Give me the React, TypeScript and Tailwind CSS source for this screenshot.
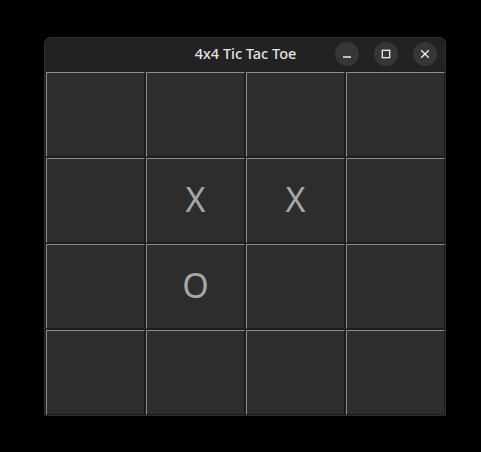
import * as React from "react";

const board: string[] = [
  "", "", "", "",
  "", "X", "X", "",
  "", "O", "", "",
  "", "", "", "",
];

function TitleButton({ children }: { children: React.ReactNode }) {
  return (
    <button className="w-6 h-6 rounded-full bg-[#363636] flex items-center justify-center text-[#eeeeee]">
      {children}
    </button>
  );
}

export default function App() {
  return (
    <div className="w-[481px] h-[452px] bg-black pt-[37px] pl-[44px]">
      <div
        className="w-[402px] border border-[#2f2f2f] rounded-t-[6px] bg-[#1e1e1e] overflow-hidden"
        style={{ fontFamily: '"Noto Sans", "Open Sans", sans-serif' }}
      >
        {/* header bar */}
        <div className="relative h-[33px] bg-[#222222] flex items-center justify-center">
          <span className="text-[14.5px] font-medium text-[#e2e2e2] pl-[1px] pb-[1px]">
            4x4 Tic Tac Toe
          </span>
          <div className="absolute right-[8px] top-[4px] flex gap-[15px]">
            <TitleButton>
              <svg width="10" height="10" viewBox="0 0 10 10">
                <path d="M1 8h8" stroke="currentColor" strokeWidth="1.3" />
              </svg>
            </TitleButton>
            <TitleButton>
              <svg width="10" height="10" viewBox="0 0 10 10">
                <rect x="1.3" y="1.3" width="7.4" height="7.4" fill="none" stroke="currentColor" strokeWidth="1.3" />
              </svg>
            </TitleButton>
            <TitleButton>
              <svg width="10" height="10" viewBox="0 0 10 10">
                <path d="M1.2 1.2l7.6 7.6M8.8 1.2l-7.6 7.6" stroke="currentColor" strokeWidth="1.3" />
              </svg>
            </TitleButton>
          </div>
        </div>

        {/* board */}
        <div className="grid grid-cols-[repeat(4,99px)] grid-rows-[repeat(4,85px)] gap-[1px] pl-[1px] pt-[1px] bg-[#1f1f1f]">
          {board.map((v, i) => (
            <button
              key={i}
              className="bg-[#2d2d2d] border-t border-l border-t-[#8c8c8c] border-l-[#8c8c8c] border-r border-b border-r-[#1b1b1b] border-b-[#1b1b1b] flex items-center justify-center pb-[3px] text-[34px] text-[#a6a6a6] leading-none"
            >
              {v}
            </button>
          ))}
        </div>
      </div>
    </div>
  );
}
